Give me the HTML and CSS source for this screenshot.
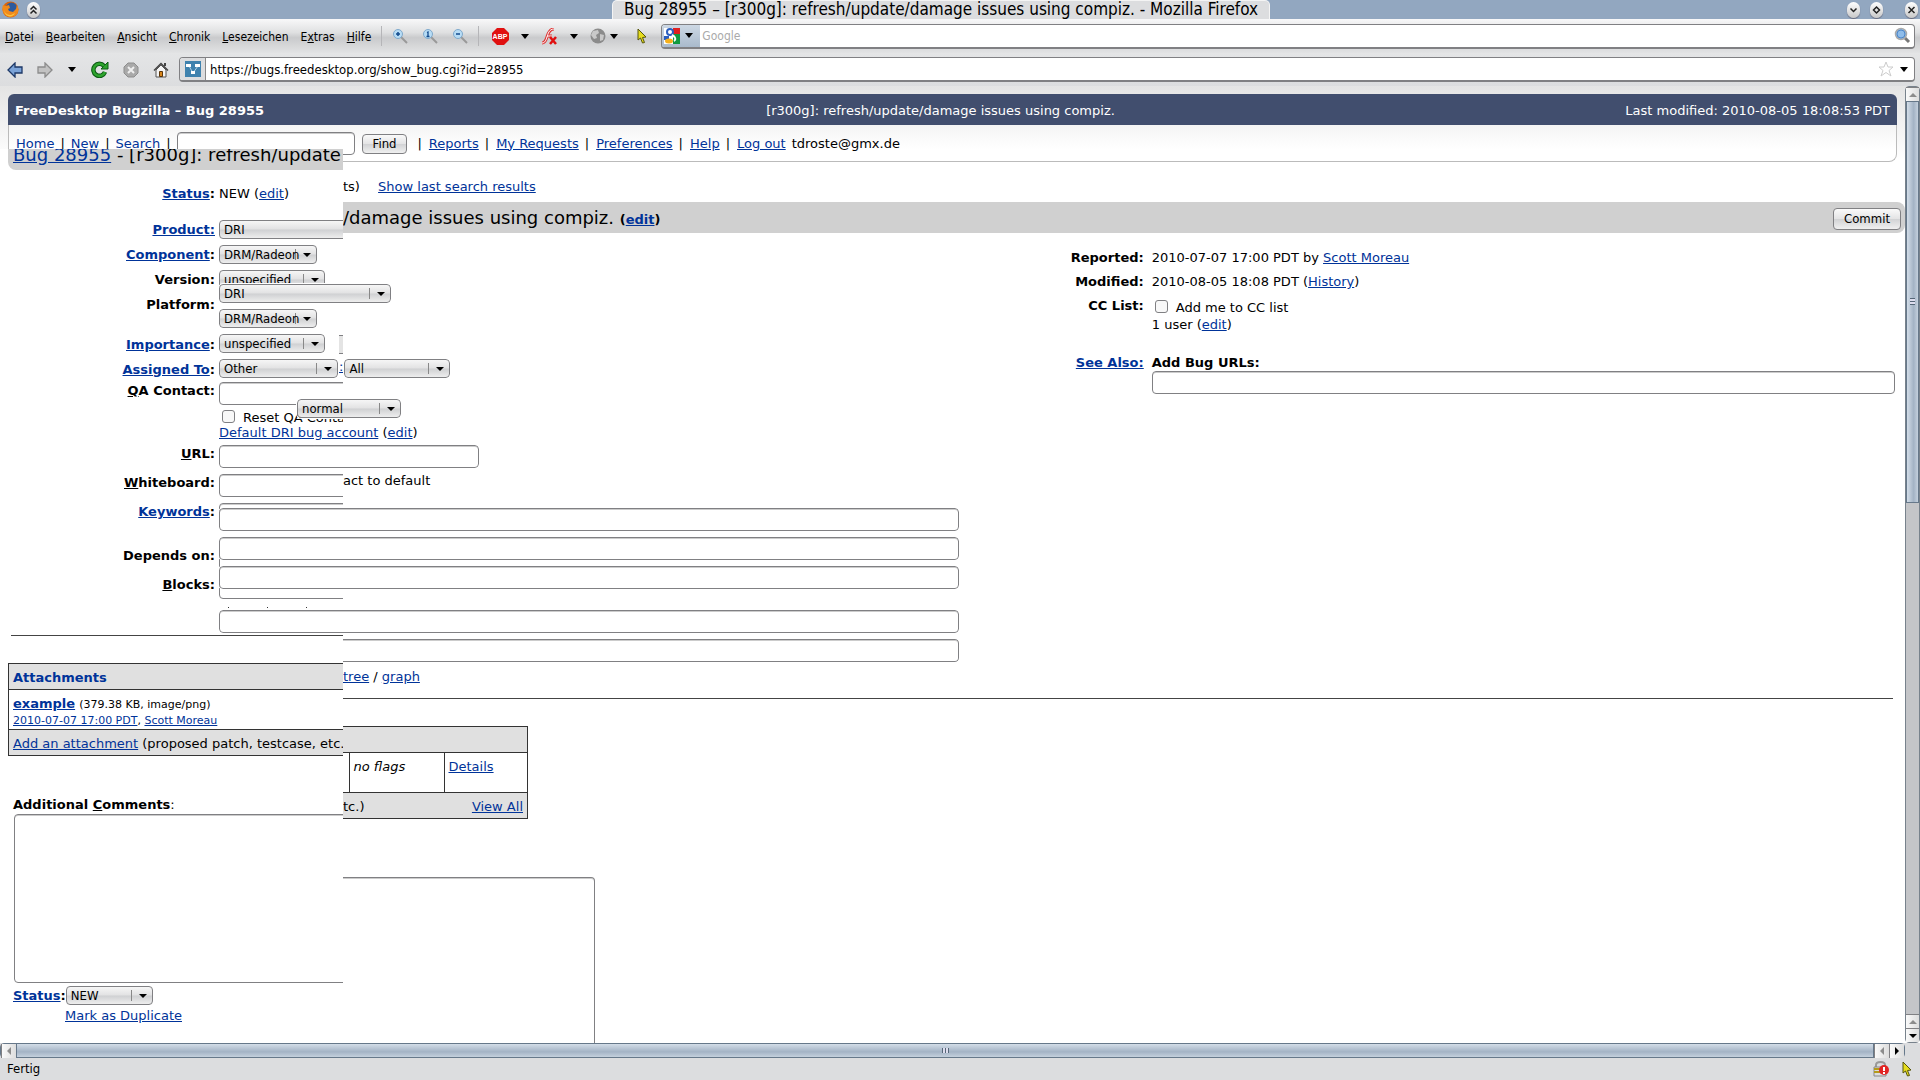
FILE: index.html
```html
<!DOCTYPE html>
<html lang="de">
<head>
    <meta charset="UTF-8">
    <meta name="viewport" content="width=device-width, initial-scale=1.0">
    <title>Bug 28955 – [r300g]: refresh/update/damage issues using compiz.</title>
    <link rel="stylesheet" href="styles.css">
</head>
<body>
    <!-- Window title -->
    <header class="titlebar">
        <div class="title-side">
            <svg width="17" height="17" viewBox="0 0 17 17"><circle cx="8.5" cy="8.5" r="8" fill="#d9640c"/><circle cx="9.500" cy="7" r="5.500" fill="#2c5a9e"/><path d="M1 4l3 1 3-1 1 3-2 1 1 2 4 1 3-3 1-4c3 5 1 12-6 12S-1 10 1 4z" fill="#f08a1c"/><path d="M2 9c1 4 4 5 7 5l4-2c-2 5-10 5-11-3z" fill="#fbc23c"/></svg>
            <button class="round" aria-label="Shade"><svg width="13" height="16" viewBox="0 0 13 16"><path d="M3.500 7.500l3-3 3 3M3.500 11.500l3-3 3 3" fill="none" stroke="#222" stroke-width="1.500"/></svg></button>
        </div>
        <h1 class="window-title">Bug 28955 – [r300g]: refresh/update/damage issues using compiz. - Mozilla Firefox</h1>
        <div class="title-side title-right">
            <button class="round" aria-label="Minimize"><svg width="13" height="16" viewBox="0 0 13 16"><path d="M3.500 6.500l3 3 3-3" fill="none" stroke="#222" stroke-width="1.500"/></svg></button>
            <button class="round" aria-label="Maximize"><svg width="13" height="16" viewBox="0 0 13 16"><path d="M6.500 5l3 3-3 3-3-3z" fill="none" stroke="#222" stroke-width="1.500"/></svg></button>
            <button class="round close" aria-label="Close"><svg width="13" height="16" viewBox="0 0 13 16"><path d="M3.500 5l6 6M9.500 5l-6 6" stroke="#222" stroke-width="1.500"/></svg></button>
        </div>
    </header>

    <!-- Menu and search -->
    <div class="toolbar menubar">
        <nav class="menu">
            <a href="#"><u>D</u>atei</a>
            <a href="#"><u>B</u>earbeiten</a>
            <a href="#"><u>A</u>nsicht</a>
            <a href="#"><u>C</u>hronik</a>
            <a href="#"><u>L</u>esezeichen</a>
            <a href="#">E<u>x</u>tras</a>
            <a href="#"><u>H</u>ilfe</a>
        </nav>
        <span class="sep"></span>
        <div class="zoom-tools">
            <button class="tool" aria-label="Zoom in"><svg width="16" height="16" viewBox="0 0 16 16"><path d="M9 9l6 6" stroke="#999" stroke-width="2"/><circle cx="6" cy="6" r="4.500" fill="#b7dcf5" stroke="#7fa9cc"/><path d="M4 6h4M6 4v4" stroke="#124a8c" stroke-width="1.500"/></svg></button>
            <button class="tool" aria-label="Normal size"><svg width="16" height="16" viewBox="0 0 16 16"><path d="M9 9l6 6" stroke="#999" stroke-width="2"/><circle cx="6" cy="6" r="4.500" fill="#b7dcf5" stroke="#7fa9cc"/><path d="M5 4.500l1-.5v4M4.500 8.500h3" stroke="#124a8c" stroke-width="1.300" fill="none"/></svg></button>
            <button class="tool" aria-label="Zoom out"><svg width="16" height="16" viewBox="0 0 16 16"><path d="M9 9l6 6" stroke="#999" stroke-width="2"/><circle cx="6" cy="6" r="4.500" fill="#b7dcf5" stroke="#7fa9cc"/><path d="M4 6h4" stroke="#124a8c" stroke-width="1.500"/></svg></button>
        </div>
        <span class="sep"></span>
        <div class="addon-tools">
            <button class="tool" aria-label="Adblock Plus"><svg width="17" height="17" viewBox="0 0 17 17"><path d="M5 0h7l5 5v7l-5 5H5l-5-5V5z" fill="#e01010"/><text class="abp" x="8" y="11" text-anchor="middle">ABP</text></svg></button>
            <span class="caret"></span>
            <button class="tool" aria-label="Flashblock"><svg width="17" height="17" viewBox="0 0 17 17"><path d="M13 1C8 1 7 6 6 9s-2 6-5 6M6 8h5" fill="none" stroke="#d33" stroke-width="3"/><path d="M13 1C8 1 7 6 6 9s-2 6-5 6M6 8h5" fill="none" stroke="#fff" stroke-width="1"/><path d="M9 9l6 7M15 9l-6 7" stroke="#e01010" stroke-width="2.500"/></svg></button>
            <span class="caret"></span>
            <button class="tool" aria-label="Proxy"><svg width="16" height="16" viewBox="0 0 16 16"><circle cx="8" cy="8" r="7.500" fill="#8b8b8b"/><path d="M3 3l5-1 1 3-3 2 1 3-3 1-3-4zM10 6l4 1-1 5-3 1z" fill="#c9c9c9"/></svg></button>
            <span class="caret near"></span>
            <button class="tool" aria-label="Pointer"><svg width="12" height="16" viewBox="0 0 12 16"><path d="M2 1l8 8-3.500.5 2 5-2 .5-2-5L2 12z" fill="#e6dc1e" stroke="#55550c"/></svg></button>
        </div>
        <form class="searchbox">
            <button type="button" class="engine" aria-label="Google">
                <svg width="16" height="16" viewBox="0 0 16 16"><path fill="#fff" d="M0 0h16v16H0z"/><path fill="#e02020" d="M9 0h7v6H9z"/><path fill="#109a40" d="M9 6h7v10H9z"/><path fill="#2b5fc0" d="M0 8h5v4H0z"/><circle cx="6" cy="4" r="3" fill="#fff" stroke="#2b5fc0" stroke-width="2"/><path d="M8 7c4 2 4 5 2 6" stroke="#fff" stroke-width="2" fill="none"/><ellipse cx="5" cy="13" rx="4" ry="2.500" fill="#f5b01c"/></svg>
                <span class="caret"></span>
            </button>
            <input type="text" aria-label="Suche" placeholder="Google">
            <svg width="17" height="17" viewBox="0 0 17 17"><path d="M10 10l5 5" stroke="#777" stroke-width="3"/><circle cx="7" cy="7" r="5.500" fill="#8fbdea" stroke="#aaa" stroke-width="1.500"/><circle cx="7" cy="7" r="4" fill="none" stroke="#4e86c8"/></svg>
        </form>
    </div>

    <!-- Navigation -->
    <div class="toolbar navbar">
        <div class="nav-tools">
            <button class="tool" aria-label="Zurück"><svg width="16" height="16" viewBox="0 0 16 16"><path d="M1 8l7-7v4h7v6H8v4z" fill="#7ba3d8" stroke="#1c3766" stroke-width="1.300"/></svg></button>
            <button class="tool" aria-label="Vor"><svg width="16" height="16" viewBox="0 0 16 16"><path d="M15 8L8 1v4H1v6h7v4z" fill="#c2c2c2" stroke="#8c8c8c" stroke-width="1.300"/></svg></button>
            <span class="caret"></span>
            <button class="tool" aria-label="Neu laden"><svg width="18" height="17" viewBox="0 0 18 17"><path d="M14 11a6 6 0 1 1-1-6" fill="none" stroke="#0c5a14" stroke-width="4.500"/><path d="M17 1v7h-7z" fill="#2ea52e" stroke="#0c5a14"/><path d="M14 11a6 6 0 1 1-1-6" fill="none" stroke="#2ea52e" stroke-width="2.500"/></svg></button>
            <button class="tool" aria-label="Stopp"><svg width="16" height="16" viewBox="0 0 16 16"><path d="M5 1h6l4 4v6l-4 4H5l-4-4V5z" fill="#a9a9a9" stroke="#8d8d8d"/><path d="M5 5l6 6M11 5l-6 6" stroke="#eee" stroke-width="2"/></svg></button>
            <button class="tool" aria-label="Startseite"><svg width="16" height="16" viewBox="0 0 16 16"><path d="M3 8v7h10V8L8 3z" fill="#f4f4f4" stroke="#555"/><path d="M1 8.500L8 1.500l7 7" fill="none" stroke="#444" stroke-width="1.500"/><path d="M12 1v3" stroke="#444" stroke-width="2"/><path d="M6.500 9.500h3v5h-3z" fill="#d8861c" stroke="#5a3408"/></svg></button>
        </div>
        <form class="urlbox">
            <span class="favicon"><svg width="16" height="16" viewBox="0 0 16 16"><path fill="#3f82ae" d="M0 0h16v16H0z"/><path d="M4 5l4 7 5-7" stroke="#a8cde4" fill="none"/><path fill="#fff" d="M1 3h5v3H1zM10 3h5v3h-5zM6 10h4v3H6z"/></svg></span>
            <input type="text" aria-label="Adresse" value="https://bugs.freedesktop.org/show_bug.cgi?id=28955">
            <svg width="16" height="16" viewBox="0 0 16 16"><path d="M8 1l2 5h5l-4 3.500 2 5.500-5-3.500L3 15l2-5.500L1 6h5z" fill="#fff" stroke="#ccc"/></svg>
            <span class="caret"></span>
        </form>
    </div>

    <div class="viewport">
        <main class="page">
            <div class="banner">
                <strong>FreeDesktop Bugzilla – Bug 28955</strong>
                <span class="summary">[r300g]: refresh/update/damage issues using compiz.</span>
                <span>Last modified: 2010-08-05 18:08:53 PDT</span>
            </div>
            <nav class="links">
                <a href="#">Home</a><i>|</i><a href="#">New</a><i>|</i><a href="#">Search</a><i>|</i>
                <input type="text" class="quick" aria-label="Quick search">
                <button class="btn">Find</button>
                <i>|</i><a href="#">Reports</a><i>|</i><a href="#">My Requests</a><i>|</i><a href="#">Preferences</a><i>|</i><a href="#">Help</a><i>|</i><a href="#">Log out</a>
                <span class="user">tdroste@gmx.de</span>
            </nav>
            <div class="results">ts) <a href="#">Show last search results</a></div>
            <div class="bug-title">
                <h2>/damage issues using compiz. <small>(<a href="#">edit</a>)</small></h2>
                <button class="btn commit">Commit</button>
            </div>
            <div class="columns">
                <div class="col-left">
                    <p class="default-text">act to default</p>
                    <p class="tree"><a href="#">tree</a> / <a href="#">graph</a></p>
                </div>
                <div class="col-right">
                    <b>Reported:</b>
                    <span>2010-07-07 17:00 PDT by <a href="#">Scott Moreau</a></span>
                    <b>Modified:</b>
                    <span>2010-08-05 18:08 PDT (<a href="#">History</a>)</span>
                    <b>CC List:</b>
                    <div>
                        <label class="check"><input type="checkbox"> Add me to CC list</label>
                        1 user (<a href="#">edit</a>)
                    </div>
                    <b class="see"><a href="#">See Also:</a></b>
                    <div class="see">
                        <label for="urls"><b>Add Bug URLs:</b></label>
                        <input type="text" id="urls" class="text">
                    </div>
                </div>
            </div>
            <hr>
            <table class="attach">
                <tr><th colspan="3"></th></tr>
                <tr class="file"><td class="stub"></td><td class="flags"><em>no flags</em></td><td><a href="#">Details</a></td></tr>
                <tr><td colspan="3" class="foot"><div>tc.) <a href="#">View All</a></div></td></tr>
            </table>
            <textarea class="comment" aria-label="Comment"></textarea>
        </main>

        <!-- Left strip, scrolled by a few lines -->
        <section class="strip">
            <h2><a href="#">Bug 28955</a> - [r300g]: refresh/update</h2>
            <div class="row status"><b><a href="#">Status</a>:</b><span>NEW (<a href="#">edit</a>)</span></div>
            <div class="row"><b><a href="#">Product:</a></b><select class="wide" aria-label="Product"><option>DRI</option></select></div>
            <div class="row"><b><a href="#">Component</a>:</b><select class="w-comp tight" aria-label="Component"><option>DRM/Radeon</option></select></div>
            <div class="row"><b>Version:</b><select class="w-ver" aria-label="Version"><option>unspecified</option></select></div>
            <div class="row platform"><b>Platform:</b></div>
            <div class="row"><b><a href="#">Importance</a>:</b><span class="edge"></span></div>
            <div class="row"><b><a href="#">Assigned To</a>:</b></div>
            <div class="row field qa"><label for="qa"><u>Q</u>A Contact:</label><input type="text" id="qa" class="text wide"></div>
            <label class="check reset"><input type="checkbox"> Reset QA Contact</label>
            <div class="row field"><label for="url"><u>U</u>RL:</label></div>
            <div class="row field"><label for="wb"><u>W</u>hiteboard:</label><input type="text" id="wb" class="text wide"></div>
            <div class="row field keywords"><b><a href="#">Keywords</a>:</b><input type="text" class="text wide" aria-label="Keywords"></div>
            <div class="row field"><b>Depends on:</b><input type="text" class="text wide" aria-label="Depends on"></div>
            <div class="row field"><label for="blocks"><u>B</u>locks:</label><input type="text" id="blocks" class="text wide"></div>
            <hr>
            <table class="attach">
                <tr><th><a href="#" class="plain">Attachments</a></th></tr>
                <tr class="file"><td><a href="#"><b>example</b></a> <small>(379.38 KB, image/png)</small><br><small><a href="#">2010-07-07 17:00 PDT</a>, <a href="#">Scott Moreau</a></small></td></tr>
                <tr><td class="foot"><a href="#">Add an attachment</a> (proposed patch, testcase, etc.)</td></tr>
            </table>
            <label class="comments-label" for="comments"><b>Additional <u>C</u>omments</b>:</label>
            <textarea id="comments"></textarea>
            <div class="new-status"><b><a href="#">Status</a>:</b><select class="w-new" aria-label="New status"><option>NEW</option></select></div>
            <a class="duplicate" href="#">Mark as Duplicate</a>
        </section>

        <!-- Form widgets that sit over both -->
        <section class="widgets">
            <select class="w-prod" aria-label="Product"><option>DRI</option></select>
            <select class="w-comp tight" aria-label="Component"><option>DRM/Radeon</option></select>
            <select class="w-ver" aria-label="Version"><option>unspecified</option></select>
            <div class="pair"><select class="w-hw" aria-label="Hardware"><option>Other</option></select><a href="#">:</a><select class="w-ver" aria-label="OS"><option>All</option></select></div>
            <select class="w-sev" aria-label="Severity"><option>normal</option></select>
            <p><a href="#">Default DRI bug account</a> (<a href="#">edit</a>)</p>
            <input type="text" id="url" class="text url">
            <input type="text" class="text long first" aria-label="Whiteboard">
            <input type="text" class="text long" aria-label="Keywords">
            <input type="text" class="text long" aria-label="Keywords">
            <span class="dots"><i></i><i></i><i></i></span>
            <input type="text" class="text long" aria-label="Depends on">
            <input type="text" class="text long cut" aria-label="Blocks">
        </section>

        <div class="vscroll">
            <span class="sb-btn up off"></span>
            <span class="sb-thumb"><i></i></span>
            <span class="sb-track"></span>
            <span class="sb-btn up off"></span>
            <span class="sb-btn down"></span>
        </div>
    </div>

    <div class="hscroll">
        <span class="sb-btn left off"></span>
        <span class="sb-thumb"><i></i></span>
        <span class="sb-btn left off"></span>
        <span class="sb-btn right"></span>
    </div>
    <footer class="statusbar">
        <span>Fertig</span>
        <svg width="16" height="16" viewBox="0 0 16 16"><path d="M3 7V4c0-4 9-4 9 0v3" fill="none" stroke="#999" stroke-width="2"/><path d="M1 6h12v9H1z" fill="#ddd" stroke="#888"/><path d="M1 8h6M1 11h6" stroke="#b59b1a" stroke-width="2"/><circle cx="11" cy="9" r="5" fill="#e22424"/><path d="M11 6v4M11 11v2" stroke="#fff" stroke-width="2"/></svg>
        <svg width="12" height="16" viewBox="0 0 12 16"><path d="M2 1l8 8-3.500.5 2 5-2 .5-2-5L2 12z" fill="#e6dc1e" stroke="#55550c"/></svg>
    </footer>
</body>
</html>
```

FILE: styles.css
```css
* {
    box-sizing: border-box;
}
body {
    margin: 0;
    height: 100vh;
    display: flex;
    flex-direction: column;
    overflow: hidden;
    background: #dcdddf;
    color: #000;
    font: 13px/16px Verdana, 'DejaVu Sans', sans-serif;
}
h1, h2, p {
    margin: 0;
    font-weight: normal;
}
a {
    color: #039;
}
button, input, select, textarea {
    margin: 0;
    font-family: Tahoma, 'DejaVu Sans Condensed', 'DejaVu Sans', sans-serif;
    font-size: 13px;
    color: #000;
}
svg {
    display: block;
    flex: none;
}

/* window title */
.titlebar {
    height: 19px;
    display: flex;
    background: #92a7c0;
}
.title-side {
    flex: 1;
    display: flex;
    align-items: center;
    gap: 8px;
    padding: 0 2px;
}
.title-right {
    justify-content: flex-end;
    gap: 10px;
    padding-left: 40px;
}
.round {
    padding: 0;
    border: 0;
    border-radius: 8px;
    background: linear-gradient(#fff, #c8c8c8);
    box-shadow: 0 1px 1px #667;
}
.close {
    margin-left: 12px;
}
.window-title {
    padding: 0 11px;
    margin-top: 1px;
    border-radius: 4px 4px 0 0;
    background: #dcdddf;
    box-shadow: 0 0 0 1px #f4f4f4;
    font: 17px/17px Tahoma, 'DejaVu Sans Condensed', sans-serif;
    white-space: nowrap;
}

/* toolbars */
.toolbar {
    display: flex;
    align-items: center;
    padding-right: 5px;
    background: linear-gradient(#f8f8f9, #dfe0e1 40%, #c9cacc 55%, #e2e3e4);
}
.menubar {
    height: 34px;
}
.navbar {
    height: 33px;
    background: linear-gradient(#e4e5e6, #dcdddf);
}
.menu {
    display: flex;
    gap: 12px;
    padding: 2px 0 0 5px;
    font: 12px/16px Tahoma, 'DejaVu Sans Condensed', sans-serif;
}
.menu a {
    color: #000;
    text-decoration: none;
}
.sep {
    width: 1px;
    height: 20px;
    margin-left: 10px;
    background: #b5b5b8;
}
.tool {
    display: block;
    padding: 0;
    border: 0;
    background: none;
}
.zoom-tools {
    display: flex;
    gap: 14px;
    padding-left: 10px;
}
.addon-tools {
    display: flex;
    align-items: center;
    gap: 12px;
    padding: 0 13px 0 13px;
}
.near {
    margin: 0 6px 0 -8px;
}
.abp {
    fill: #fff;
    font: bold 7px 'Liberation Sans', sans-serif;
}
.caret {
    flex: none;
    border: 4px solid transparent;
    border-top: 5px solid #000;
    border-bottom: 0;
}
.searchbox, .urlbox {
    flex: 1;
    height: 25px;
    display: flex;
    align-items: center;
    border: 2px solid #808083;
    border-width: 1px 1px 2px;
    border-radius: 4px;
    background: #fff;
    padding-right: 3px;
    overflow: hidden;
}
.searchbox input, .urlbox input {
    flex: 1;
    border: 0;
    padding: 0 4px;
    background: none;
}
.searchbox input {
    padding: 0 2px;
    font-size: 12px;
}
.searchbox input::placeholder {
    color: #aaa;
}
.engine {
    display: flex;
    align-items: center;
    gap: 5px;
    height: 100%;
    padding: 0 7px 0 2px;
    border: 0;
    background: linear-gradient(#cdd8e4, #a9bacc);
}
.nav-tools {
    display: flex;
    align-items: center;
    gap: 14px;
    width: 179px;
    padding-left: 7px;
}
.nav-tools .caret {
    margin: 0 1px;
}
.favicon {
    padding: 3px 4px 4px 5px;
    border-right: 1px solid #888;
    background: #dcdddf;
}
.urlbox {
    padding-right: 6px;
}
.urlbox .caret {
    margin-left: 6px;
}

/* document */
.viewport {
    flex: 1;
    min-height: 0;
    display: flex;
    position: relative;
    overflow: hidden;
    background: #fff linear-gradient(#e4e4e4, #fff 74px) no-repeat;
}
.page {
    flex: 1;
    padding-top: 8px;
}
.banner {
    display: grid;
    grid-template-columns: 1fr auto 1fr;
    align-items: center;
    height: 31px;
    margin: 0 8px;
    padding: 2px 7px 0;
    border-radius: 6px 6px 0 0;
    background: #414e6e;
    color: #fff;
}
.summary {
    padding-right: 24px;
}
.banner span:last-child {
    text-align: right;
}
.links {
    display: flex;
    align-items: center;
    gap: 6px;
    height: 37px;
    margin: 0 8px;
    padding: 1px 7px 0 7px;
    border: 1px solid #bbb;
    border-top: 0;
    border-radius: 0 0 8px 8px;
    background: linear-gradient(#f4f4f4, #fff 24px);
}
.links i {
    font-style: normal;
}
.links .btn {
    margin: 0 4px 0 1px;
}
.links .btn ~ i {
    margin-right: 1px;
}
.text, .quick {
    display: block;
    height: 23px;
    border: 1px solid #808083;
    border-radius: 4px;
    background: #fff;
    box-shadow: inset 0 1px #ccc;
    padding: 0 4px;
}
.quick {
    width: 178px;
}
.btn {
    height: 20px;
    padding: 0 10px;
    border: 1px solid #808083;
    border-radius: 4px;
    background: linear-gradient(#fafafa, #e4e4e5 48%, #d2d3d5 52%, #f0f0f0);
}
.results {
    padding: 17px 0 7px 343px;
}
.results a {
    margin-left: 14px;
}
.bug-title {
    display: flex;
    align-items: center;
    height: 31px;
    margin-left: 343px;
    padding: 2px 4px 0 0;
    background: #d0d0d0;
    border-radius: 0 8px 8px 0;
}
.bug-title h2 {
    flex: 1;
    font-size: 18px;
}
.bug-title small {
    font-size: 13px;
    font-weight: bold;
}
.commit {
    height: 22px;
}
.columns {
    display: grid;
    grid-template-columns: 55% 1fr;
    height: 465px;
}
.col-left {
    padding: 240px 0 0 343px;
}
.tree {
    margin-top: 180px;
}
.col-right {
    display: grid;
    grid-template-columns: 96px 1fr;
    column-gap: 8px;
    row-gap: 8px;
    align-content: start;
    padding: 17px 10px 0 0;
}
.col-right > b {
    text-align: right;
}
.check {
    display: flex;
    align-items: center;
    gap: 8px;
    height: 19px;
}
input[type="checkbox"] {
    appearance: none;
    flex: none;
    width: 13px;
    height: 13px;
    margin: 0 0 3px 3px;
    border: 1px solid #808083;
    border-radius: 3px;
    background: #f8f8f8;
}
.see {
    margin-top: 14px;
}
.see .text {
    width: 100%;
}
hr {
    height: 1px;
    margin: 0;
    border: 0;
    background: #444;
}
.page > hr {
    margin: 0 12px 27px 343px;
}
.attach {
    border-collapse: collapse;
}
.attach th, .attach td {
    height: 26px;
    padding: 2px 4px 0;
    border: 1px solid #333;
    background: #e0e0e0;
    text-align: left;
}
.attach .file td {
    height: 40px;
    padding-top: 6px;
    background: #fff;
    vertical-align: top;
}
.plain {
    text-decoration: none;
}
.page .attach {
    width: 185px;
    margin-left: 343px;
}
.page .attach th, .page .attach td:first-child {
    border-left: 0;
    padding-left: 0;
}
.attach .stub {
    width: 6px;
}
.attach .flags {
    width: 95px;
}
.foot div {
    display: flex;
    justify-content: space-between;
}
textarea {
    display: block;
    resize: none;
    border: 1px solid #808083;
    border-radius: 4px;
    box-shadow: inset 0 1px #ccc;
}
.comment {
    width: 252px;
    height: 260px;
    margin: 58px 0 0 343px;
    border-left: 0;
    border-radius: 0 4px 0 0;
}

/* select boxes */
select {
    appearance: none;
    display: block;
    height: 19px;
    padding: 0 28px 0 4px;
    border: 1px solid #808083;
    border-radius: 4px;
    background:
        url("data:image/svg+xml,%3Csvg xmlns='http://www.w3.org/2000/svg' width='21' height='17'%3E%3Cpath d='M.5 3v11' stroke='%23888'/%3E%3Cpath d='M8 7h8l-4 4z'/%3E%3C/svg%3E") right center no-repeat,
        linear-gradient(#f6f6f6, #e2e2e3 48%, #cfd0d2 52%, #eee);
}
.tight {
    padding-right: 16px;
}
.w-prod { width: 172px; }
.w-comp { width: 98px; }
.w-ver { width: 106px; }
.w-hw { width: 119px; }
.w-sev { width: 104px; }
.w-new { width: 87px; }

/* scrolled strip */
.strip {
    position: absolute;
    top: 63px;
    left: 0;
    width: 343px;
    bottom: 0;
    overflow: hidden;
    white-space: nowrap;
    background: #fff;
}
.strip h2 {
    height: 21px;
    margin-left: 8px;
    padding-left: 5px;
    border-radius: 0 0 0 8px;
    background: #d0d0d0;
    font-size: 18px;
    line-height: 12px;
}
.row {
    display: flex;
    align-items: center;
    gap: 4px;
    height: 25px;
}
.row > b, .row > label {
    flex: none;
    width: 215px;
    text-align: right;
    font-weight: bold;
}
.row .wide {
    width: 200px;
    flex: none;
}
.status {
    margin: 11px 0;
}
.platform {
    margin-bottom: 15px;
}
.edge {
    width: 8px;
    height: 19px;
    margin-left: 120px;
    border: 1px solid #808083;
    border-width: 1px 0;
    background: #e4e4e4;
}
.field {
    align-items: flex-start;
    height: 29px;
}
.field > b, .field > label {
    padding-top: 1px;
}
.qa {
    height: 26px;
}
.reset {
    margin: 0 0 18px 219px;
}
.keywords {
    margin-bottom: 15px;
}
.strip hr {
    margin: 30px 0 27px 11px;
}
.strip .attach {
    width: 370px;
    margin-left: 8px;
}
.strip .attach small {
    font-size: 11px;
    line-height: 13px;
}
.comments-label {
    display: block;
    margin: 41px 0 1px 13px;
}
.strip textarea {
    width: 370px;
    height: 169px;
    margin-left: 14px;
}
.new-status {
    display: flex;
    align-items: center;
    height: 25px;
    padding-left: 13px;
}
.duplicate {
    margin-left: 65px;
}

/* widgets over the strip */
.widgets {
    position: absolute;
    top: 198px;
    left: 219px;
    width: 740px;
    display: flex;
    flex-direction: column;
    align-items: flex-start;
    gap: 6px;
}
.widgets select, .widgets .text {
    outline: 1px solid #fff;
}
.pair {
    display: flex;
    gap: 1px;
}
.w-sev {
    margin: 15px 0 0 78px;
}
.widgets p {
    background: #fff;
    width: 230px;
    height: 17px;
    line-height: 18px;
}
.url {
    width: 260px;
    margin-top: -2px;
}
.long {
    width: 100%;
}
.first {
    margin-top: 34px;
}
.dots {
    display: flex;
    gap: 38px;
    height: 14px;
    margin-bottom: -5px;
    padding: 12px 0 0 9px;
}
.dots i {
    width: 1px;
    height: 1px;
    background: #333;
}
.cut {
    width: calc(100% - 124px);
    margin-left: 124px;
    border-left: 0;
    border-radius: 0 4px 4px 0;
}

/* scrollbars and status */
.vscroll {
    width: 15px;
    display: flex;
    flex-direction: column;
    border: 1px solid #78828c;
    border-radius: 4px;
    background: #c4c5c8;
    z-index: 1;
}
.vscroll .sb-thumb {
    flex: 43;
    background: linear-gradient(90deg, #d3dde8, #a3b3c5 60%, #c4d0dd);
}
.sb-track {
    flex: 55;
}
.sb-thumb {
    display: flex;
    align-items: center;
    justify-content: center;
    border: 1px solid #66788a;
}
.vscroll i {
    width: 5px;
    height: 7px;
    background: repeating-linear-gradient(#567 0 1px, #dde 1px 3px);
}
.sb-btn {
    flex: none;
    width: 15px;
    height: 14px;
    display: flex;
    align-items: center;
    justify-content: center;
    background: linear-gradient(90deg, #fafafa, #ddd);
}
.vscroll .sb-btn {
    width: 100%;
    border-top: 1px solid #808083;
}
.sb-btn::after {
    content: "";
    border: 4px solid transparent;
}
.up::after { border-bottom-color: #000; border-top: 0; }
.down::after { border-top-color: #000; border-bottom: 0; }
.left::after { border-right-color: #000; border-left: 0; }
.right::after { border-left-color: #000; border-right: 0; }
.off::after { opacity: .4; }
.hscroll {
    display: flex;
    height: 15px;
    margin-right: 15px;
    border: 1px solid #66788a;
    border-radius: 4px;
    background: #c4c5c8;
}
.hscroll .sb-thumb {
    flex: 1;
    border-width: 0 1px;
    background: linear-gradient(#d3dde8, #a3b3c5 60%, #c4d0dd);
}
.hscroll i {
    width: 7px;
    height: 5px;
    background: repeating-linear-gradient(90deg, #567 0 1px, #dde 1px 3px);
}
.hscroll .sb-btn {
    border-left: 1px solid #808083;
}
.statusbar {
    display: flex;
    align-items: center;
    gap: 12px;
    height: 22px;
    padding: 0 7px;
    font-family: Tahoma, 'DejaVu Sans Condensed', sans-serif;
}
.statusbar span {
    flex: 1;
}
```
